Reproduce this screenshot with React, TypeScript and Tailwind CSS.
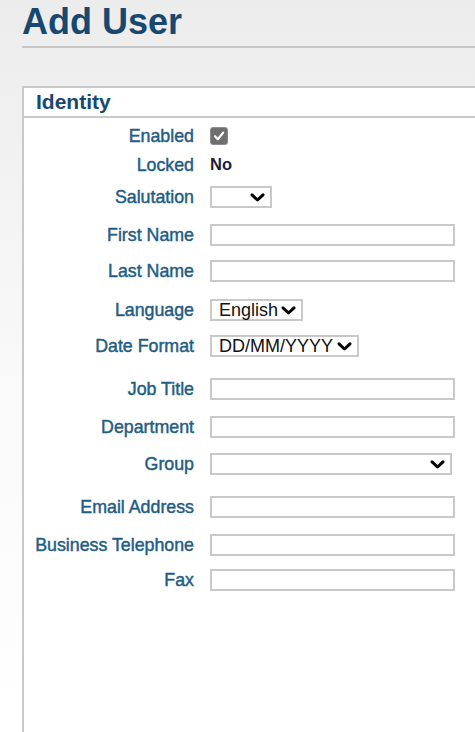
import React from "react";

const Chevron = () => (
  <svg width="15" height="9" viewBox="0 0 15 9" className="shrink-0">
    <polyline points="2,1.8 7.5,7 13,1.8" fill="none" stroke="#000" strokeWidth="3" strokeLinecap="round" strokeLinejoin="round" />
  </svg>
);

type Row = { label: string; mt: number; kind: "check" | "text" | "input" | "select"; value?: string; w?: number };

const rows: Row[] = [
  { label: "Enabled", mt: 7, kind: "check" },
  { label: "Locked", mt: 7, kind: "text", value: "No" },
  { label: "Salutation", mt: 10, kind: "select", value: "", w: 62 },
  { label: "First Name", mt: 16, kind: "input" },
  { label: "Last Name", mt: 14, kind: "input" },
  { label: "Language", mt: 17, kind: "select", value: "English", w: 93 },
  { label: "Date Format", mt: 14, kind: "select", value: "DD/MM/YYYY", w: 149 },
  { label: "Job Title", mt: 21, kind: "input" },
  { label: "Department", mt: 16, kind: "input" },
  { label: "Group", mt: 15, kind: "select", value: "", w: 242 },
  { label: "Email Address", mt: 21, kind: "input" },
  { label: "Business Telephone", mt: 16, kind: "input" },
  { label: "Fax", mt: 13, kind: "input" },
];

function Field({ r }: { r: Row }) {
  if (r.kind === "check") {
    return (
      <div className="w-[18px] h-[18px] rounded-[3px] bg-[#6f6f6f] border border-[#8c8c8c] flex items-center justify-center">
        <svg width="14" height="14" viewBox="0 0 14 14">
          <polyline points="3,7.2 5.8,10.2 11.2,3.6" fill="none" stroke="#fff" strokeWidth="2.2" strokeLinecap="round" strokeLinejoin="round" />
        </svg>
      </div>
    );
  }
  if (r.kind === "text") {
    return <span className="text-[16.5px] font-bold text-[#1d1d3a] leading-[22px]">{r.value}</span>;
  }
  if (r.kind === "input") {
    return <div className="w-[245px] h-[22px] border-2 border-[#c9c9c9] bg-white" />;
  }
  return (
    <div
      className="h-[22px] border-2 border-[#c9c9c9] bg-white flex items-center justify-between pl-[7px] pr-[5px]"
      style={{ width: r.w }}
    >
      <span className="text-[18px] text-[#111] leading-[18px] whitespace-nowrap">{r.value}</span>
      <Chevron />
    </div>
  );
}

export default function App() {
  return (
    <div
      className="w-[475px] h-[732px] overflow-hidden bg-gradient-to-b from-[#ececec] via-[#f9f9f9] to-white"
      style={{ fontFamily: '"Liberation Sans", Arial, sans-serif' }}
    >
      <div className="pl-[22px]">
        <h1 className="pt-[2px] text-[36px] font-bold leading-[40px] text-[#164870]">Add User</h1>
        <div className="mt-[4px] h-[2px] bg-[#c6c6c6]" />
        <div className="mt-[38px] border-l-2 border-t-2 border-[#c9c9c9] bg-white h-[700px]">
          <div className="h-[30px] border-b-2 border-[#c9c9c9] pl-[12px] flex items-center">
            <span className="text-[21px] font-bold text-[#164870] leading-[28px]">Identity</span>
          </div>
          <div className="flex flex-col">
            {rows.map((r) => (
              <div key={r.label} className="flex items-center h-[22px]" style={{ marginTop: r.mt }}>
                <div className="w-[170px] text-right text-[17.8px] text-[#1f5d84] [-webkit-text-stroke:0.45px_#1f5d84] whitespace-nowrap leading-[22px]">
                  {r.label}
                </div>
                <div className="ml-[16px]">
                  <Field r={r} />
                </div>
              </div>
            ))}
          </div>
        </div>
      </div>
    </div>
  );
}
